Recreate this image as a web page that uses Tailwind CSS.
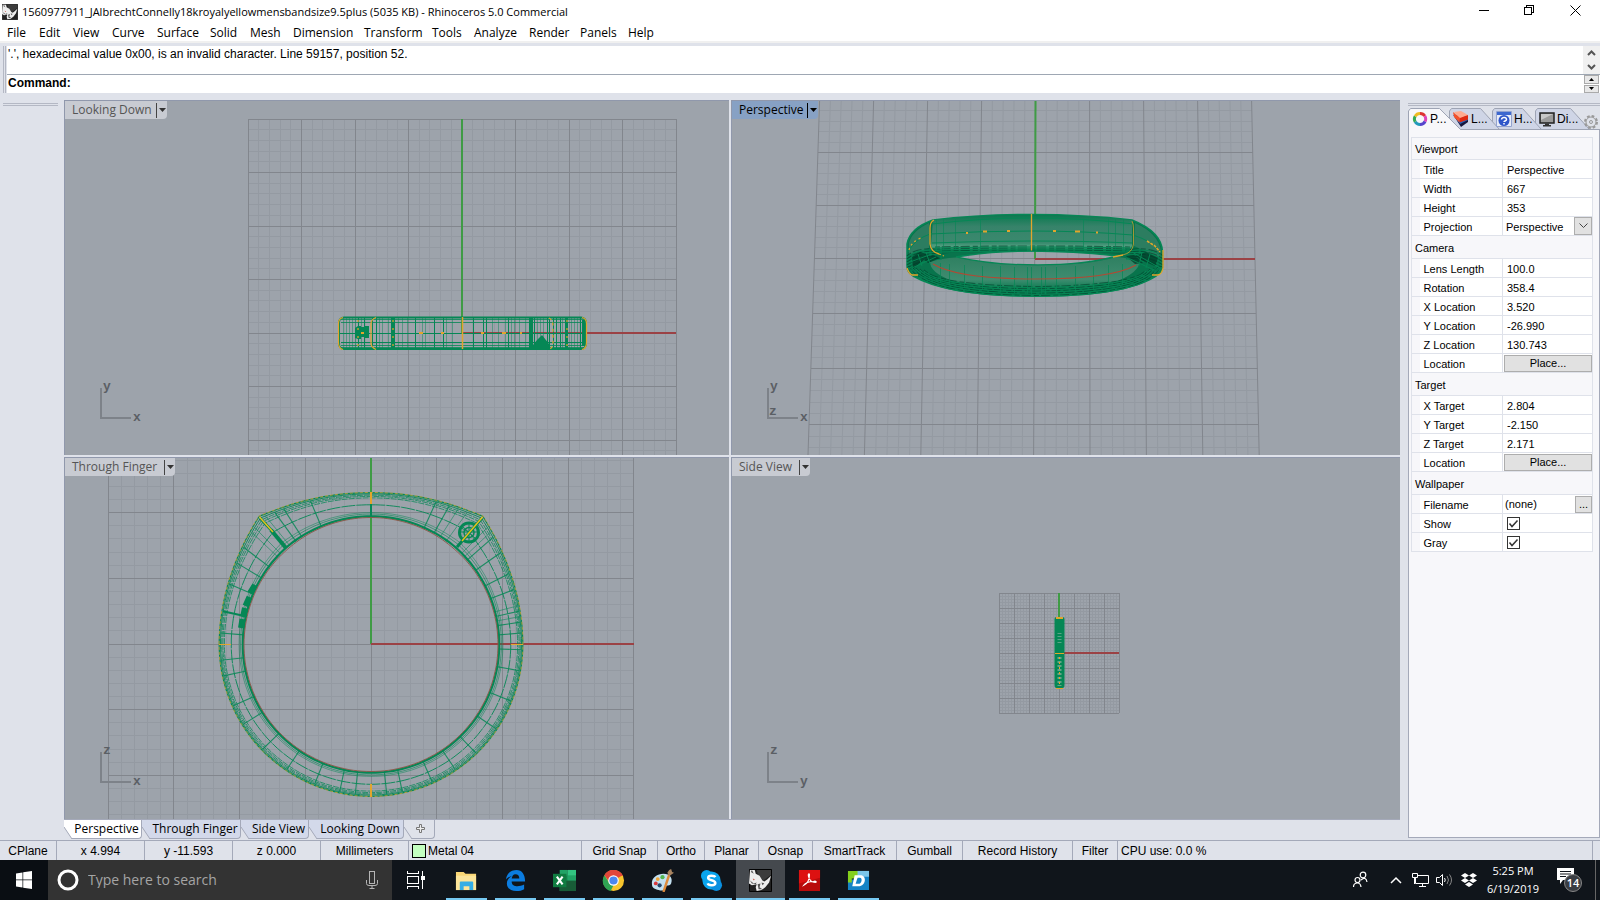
<!DOCTYPE html>
<html lang="en">
<head>
<meta charset="utf-8">
<title>Rhinoceros 5.0 Commercial</title>
<script src="https://cdn.jsdelivr.net/npm/@tailwindcss/browser@4"></script>
</head>
<body class="h-screen flex flex-col overflow-hidden bg-[#dfe2ea] text-black text-[12px] leading-4 font-['Open_Sans','Noto_Sans',sans-serif] select-none">

<header class="bg-white shrink-0">
  <div class="h-[23px] flex items-center">
    <svg class="ml-[2px] mr-1 size-4" viewBox="0 0 24 24"><use href="#rhino"/></svg>
    <h1 class="text-[11px] grow whitespace-nowrap">1560977911_JAlbrechtConnelly18kroyalyellowmensbandsize9.5plus (5035 KB) - Rhinoceros 5.0 Commercial</h1>
    <div class="flex self-start pr-[2px]">
      <button aria-label="Minimize" class="w-[45px] h-5 flex items-center justify-center"><svg width="11" height="11" fill="none" stroke="#000" shape-rendering="crispEdges"><path d="M0 5.500h10"/></svg></button>
      <button aria-label="Restore" class="w-[45px] h-5 flex items-center justify-center"><svg width="11" height="11" fill="none" stroke="#000" shape-rendering="crispEdges"><path d="M.5 2.500h7v7h-7zM2.500 2.500v-2h7v7h-2"/></svg></button>
      <button aria-label="Close" class="w-[46px] h-5 flex items-center justify-center"><svg width="11" height="11" fill="none" stroke="#000"><path d="M.5.5l10 10M10.500.5l-10 10"/></svg></button>
    </div>
  </div>
  <nav class="h-[18px] flex items-center pl-[7px] pt-[2px] text-[12px]" id="menu"></nav>
  <div class="h-[2px] bg-[#f0f0f0]"></div>
</header>

<section class="shrink-0 pt-[3px] pl-[3px] flex h-[50px]" aria-label="Command history">
  <div class="w-[3px] mr-px border-x border-[#b4b8c4]"></div>
  <div class="grow flex flex-col bg-white font-['Liberation_Sans',sans-serif]">
    <div class="h-[29px] shrink-0 flex border-b border-[#9ea7b3]">
      <p class="grow text-[12px] pl-px whitespace-nowrap">'.', hexadecimal value 0x00, is an invalid character. Line 59157, position 52.</p>
      <div class="w-[17px] bg-[#f0f0f0] flex flex-col items-center justify-around">
        <button aria-label="Scroll up" class="flex"><svg width="9" height="6" fill="none" stroke="#555" stroke-width="2"><path d="M1 5l3.500-3.500L8 5"/></svg></button>
        <button aria-label="Scroll down" class="flex"><svg width="9" height="6" fill="none" stroke="#555" stroke-width="2"><path d="M1 1l3.500 3.500L8 1"/></svg></button>
      </div>
    </div>
    <div class="h-[18px] flex items-start">
      <label for="cmd" class="font-bold pl-px">Command:</label>
      <input id="cmd" class="grow h-4 outline-none">
      <div class="w-[15px] mr-px h-[18px] flex flex-col gap-px">
        <button aria-label="Previous" class="grow bg-[#e8e8e8] border border-[#aaa] flex items-center justify-center"><svg width="5" height="3"><path d="M0 3l2.500-3L5 3z"/></svg></button>
        <button aria-label="Next" class="grow bg-[#e8e8e8] border border-[#aaa] flex items-center justify-center"><svg width="5" height="3"><path d="M0 0l2.500 3L5 0z"/></svg></button>
      </div>
    </div>
  </div>
</section>

<main class="grow min-h-0 flex pt-[7px]">
  <aside class="w-16 shrink-0 px-[3px] pt-[3px]"><div class="h-[3px] w-[55px] border-y border-[#b4b8c4]"></div></aside>

  <div class="grow min-w-0 flex flex-col">
    <div class="grow min-h-0 grid grid-cols-[665fr_669fr] grid-rows-[355fr_362fr] gap-[2px]">
      <section class="relative overflow-hidden bg-[#9da3ab] border-t border-l border-[#9098ac]">
        <svg class="block w-full h-full" viewBox="65 101 664 354" preserveAspectRatio="xMidYMid slice" id="v1"></svg>
        <div class="absolute left-0 top-0 h-[18px] flex items-center bg-[#c8cbd2] text-[#555] rounded-br-sm"><span class="pl-[7px] w-[91px]">Looking Down</span><button aria-label="Looking Down menu" class="w-[11px] h-[15px] border-l border-[#444] flex items-center justify-center"><svg width="7" height="4" fill="#333"><path d="M0 0h7L3.500 4z"/></svg></button></div>
      </section>
      <section class="relative overflow-hidden bg-[#9da3ab] border-t border-l border-[#9098ac]">
        <svg class="block w-full h-full" viewBox="732 101 668 354" preserveAspectRatio="xMidYMid slice" id="v2"></svg>
        <div class="absolute left-0 top-0 h-[18px] flex items-center bg-[#87a1c4] rounded-br-sm"><span class="pl-[7px] w-[75px]">Perspective</span><button aria-label="Perspective menu" class="w-[11px] h-[15px] border-l border-black flex items-center justify-center"><svg width="7" height="4"><path d="M0 0h7L3.500 4z"/></svg></button></div>
      </section>
      <section class="relative overflow-hidden bg-[#9da3ab] border-t border-l border-[#9098ac]">
        <svg class="block w-full h-full" viewBox="65 458 664 361" preserveAspectRatio="xMidYMid slice" id="v3"></svg>
        <div class="absolute left-0 top-0 h-[18px] flex items-center bg-[#c8cbd2] text-[#555] rounded-br-sm"><span class="pl-[7px] w-[99px]">Through Finger</span><button aria-label="Through Finger menu" class="w-[11px] h-[15px] border-l border-[#444] flex items-center justify-center"><svg width="7" height="4" fill="#333"><path d="M0 0h7L3.500 4z"/></svg></button></div>
      </section>
      <section class="relative overflow-hidden bg-[#9da3ab] border-t border-l border-[#9098ac]">
        <svg class="block w-full h-full" viewBox="732 458 668 361" preserveAspectRatio="xMidYMid slice" id="v4"></svg>
        <div class="absolute left-0 top-0 h-[18px] flex items-center bg-[#c8cbd2] text-[#555] rounded-br-sm"><span class="pl-[7px] w-[67px]">Side View</span><button aria-label="Side View menu" class="w-[11px] h-[15px] border-l border-[#444] flex items-center justify-center"><svg width="7" height="4" fill="#333"><path d="M0 0h7L3.500 4z"/></svg></button></div>
      </section>
    </div>
    <div class="h-[21px] shrink-0 flex border-t border-[#a4a9b9]" id="viewtabs"></div>
  </div>

  <aside class="w-[200px] shrink-0 pl-2 flex flex-col">
    <div class="mt-[3px] h-[3px] border-y border-[#b4b8c4]"></div>
    <div class="relative h-6 shrink-0 flex items-end text-[12px] font-['Liberation_Sans',sans-serif]">
      <svg class="absolute inset-0 w-full h-full" viewBox="1408 106 192 24" preserveAspectRatio="none" stroke="#9ea4b4">
        <path d="M1535.500 129.500V111l2-2.500h33l19 21z" fill="#cfd5e6"/>
        <path d="M1492.500 129.500V111l2-2.500h28l19 21z" fill="#cfd5e6"/>
        <path d="M1449.500 129.500V111l2-2.500h29l19 21z" fill="#cfd5e6"/>
        <path d="M1459 129.500h141" fill="none"/>
        <path d="M1408.500 131V111l2-2.500h29l21 21V131z" fill="#f7f7fa" />
      </svg>
      <button class="relative w-[41px] h-[22px] pl-[4px] pb-px flex items-center gap-[2px]"><svg width="16" height="16" fill="none" stroke-width="3"><path stroke="#d33" d="M8 2.500A5.500 5.500 0 0 1 12.800 5"/><path stroke="#d4b" d="M12.800 5A5.500 5.500 0 0 1 13 10.500"/><path stroke="#54c" d="M13 10.500A5.500 5.500 0 0 1 8 13.500"/><path stroke="#29b" d="M8 13.500A5.500 5.500 0 0 1 3.200 10.800"/><path stroke="#3a5" d="M3.200 10.800A5.500 5.500 0 0 1 3.200 5.200"/><path stroke="#eb2" d="M3.200 5.200A5.500 5.500 0 0 1 8 2.500"/></svg>P...</button>
      <button class="relative w-[43px] h-[22px] pl-[4px] pb-px flex items-center gap-[2px]"><svg width="16" height="16"><path d="M1 5l7 11 7-5V8z" fill="#16163c"/><path d="M0 4l7 9 8-4V5z" fill="#2a62b8"/><path d="M1 1l7-1 7 4-8 4z" fill="#ffab90"/><path d="M0 1l7 6-.5 4.500L1 6z" fill="#f4502a"/><path d="M7 7l8-3v4.500l-8.500 3z" fill="#e02a10"/></svg>L...</button>
      <button class="relative w-[43px] h-[22px] pl-[4px] pb-px flex items-center gap-[2px]"><svg width="16" height="16"><path d="M.5.5h15v15H.5z" fill="#e8ecf8" stroke="#93a3cf"/><path d="M1 1h14v3H1z" fill="#3d68cf"/><circle cx="8" cy="9.500" r="5.500" fill="#2e56c9"/><path d="M5.500 8.500c.5-3 5-2.500 5 0 0 1.500-2.500 1.500-2.500 2.500m0 1v1.500" fill="none" stroke="#fff" stroke-width="1.500"/></svg>H...</button>
      <button class="relative w-[45px] h-[22px] pl-[4px] pb-px flex items-center gap-[2px]"><svg width="16" height="16"><path d="M1 2h14v10H1z" fill="#9b9b9b" stroke="#222" stroke-width="1.500"/><path d="M2 3h12L2 9z" fill="#c8c8c8"/><path d="M6 12.500h4v1.500h2v1.500H4V14h2z" fill="#333"/></svg>Di...</button>
      <button aria-label="Panel options" class="relative h-[22px] pl-[3px] flex items-end"><svg width="16" height="16" fill="none" stroke="#999"><circle cx="8" cy="8" r="6" stroke-width="2" stroke-dasharray="2.700 2"/><circle cx="8" cy="8" r="5"/><circle cx="8" cy="8" r="1.500"/></svg></button>
    </div>
    <div class="grow bg-[#f7f7fa] border-x border-b border-[#a4a9b9] pt-[7px] px-[2px] pr-[6px] mb-[2px]">
      <table class="w-full table-fixed border border-[#dfe2ea] text-[11px] leading-[14px] font-['Liberation_Sans',sans-serif] border-collapse" id="props"></table>
    </div>
  </aside>
</main>

<div class="h-5 shrink-0 flex border-t border-[#a4a9b9] text-[12px] font-['Liberation_Sans',sans-serif]" id="status"></div>

<footer class="h-10 shrink-0 bg-[#10151b] flex items-stretch text-white">
  <button aria-label="Start" class="w-12 flex items-center justify-center bg-[#0a0e13]"><svg width="16" height="18" viewBox="0 0 16 16" fill="#fff" preserveAspectRatio="none"><path d="M0 2.200L6.500 1.300V7.600H0zM7.200 1.200L16 0v7.600H7.200zM0 8.300h6.500v6.300L0 13.700zM7.200 8.300H16V16l-8.800-1.200z"/></svg></button>
  <div class="w-[344px] bg-[#333] flex items-center">
    <svg class="ml-[9px]" width="22" height="22"><circle cx="11" cy="11" r="9" fill="none" stroke="#fff" stroke-width="3"/></svg>
    <input aria-label="Search" placeholder="Type here to search" class="ml-[9px] grow bg-transparent text-[14px] placeholder:text-[#a5a5a5] outline-none">
    <button aria-label="Speak" class="mr-[14px]"><svg width="12" height="18" fill="none" stroke="#b5b5b5"><rect x="3.500" y=".5" width="5" height="12"/><path d="M.5 9v3.500q0 2 2.500 2h6q2.500 0 2.500-2V9M6 14.500v3M3.500 17.500h5"/></svg></button>
  </div>
  <button aria-label="Task view" class="w-[47px] flex items-center justify-center"><svg width="18" height="18" fill="none" stroke="#fff" shape-rendering="crispEdges"><path d="M.5 5.500h11v7H.5zM.5 0v2.500h11V0M.5 18v-2.500h11V18M15.500 0v18"/><path d="M14 5h3v3h-3z" fill="#fff"/></svg></button>
  <nav class="flex grow pl-[3px]" id="apps" aria-label="Running apps"></nav>
  <div class="flex items-center">
    <button aria-label="People" class="mr-[22px]"><svg width="16" height="18" fill="none" stroke="#fff" stroke-width="1.200"><circle cx="5.500" cy="9" r="2.500"/><circle cx="11" cy="4" r="2.800"/><path d="M1.500 16q0-4 4-4 3 0 3.500 4M9 9q5-4 6 2"/></svg></button>
    <button aria-label="Show hidden icons" class="mr-[10px]"><svg width="12" height="8" fill="none" stroke="#fff" stroke-width="1.500"><path d="M1 7l5-5 5 5"/></svg></button>
    <svg class="mr-[7px]" width="17" height="14" fill="none" stroke="#fff"><path d="M5.500 2.500h11v8h-13v-6M7 13.500h7M10.500 10.500v3M.5.5h5v4h-5zM2.500 5v6"/></svg>
    <svg class="mr-2" width="17" height="14" fill="none" stroke="#fff"><path d="M.5 4.500h3l3-3v11l-3-3h-3z"/><path d="M8.500 5q1.500 2 0 4" /><path d="M11 3q3 4 0 8M13.500 1.500q4 5.500 0 11" stroke="#888"/></svg>
    <svg class="mr-[9px]" width="16" height="14" fill="#fff"><path d="M4 0l4 2.500L4 5 0 2.500zM12 0l4 2.500L12 5 8 2.500zM4 5l4 2.500L4 10 0 7.500zM12 5l4 2.500-4 2.500-4-2.500zM8 9l4 2.500L8 14l-4-2.500z"/></svg>
    <div class="w-[54px] text-center text-[11px] leading-[18px] whitespace-nowrap">5:25 PM<br>6/19/2019</div>
    <button aria-label="Notifications" class="relative ml-[17px] w-[26px] h-6"><svg width="26" height="24"><path d="M0 0h17v12H6l-3 4v-4H0z" fill="#fff"/><path d="M3 3.500h11M3 6h11M3 8.500h6" stroke="#10151b"/><circle cx="16" cy="15" r="8.500" fill="#3a3d42" stroke="#888"/></svg><span class="absolute left-[7px] top-[7px] w-[18px] text-center text-[11px] font-semibold leading-4">14</span></button>
    <div class="ml-[12px] w-[5px] h-10 border-l border-[#666]"></div>
  </div>
</footer>

<svg class="hidden"><defs>
  <symbol id="rhino" viewBox="0 0 24 24"><path d="M.5.5h23v23H.5z" fill="#222" stroke="#000"/><path d="M8 1h15v5l-8 6-5-4z" fill="#3c3c3c"/><path d="M1 1h5l1 4 4 2 3 5 2 1 3-2 4-4-2 7-4 5-4 3-5 1-1-4 1-3-5 1-3-2z" fill="#ededed"/><path d="M3 1l2 4-3-2zM1 12l4 3 3-1-1 2-4-1zM9 16l3-1-1 4 3 2h-4zM13 14l3 1-2 2z" fill="#555"/><path d="M4 10l2 1-1 1z" fill="#c0392b"/></symbol>
</defs></svg>

<script>
const $ = id => document.getElementById(id);

/* Menu bar: label and the width of its slot */
$('menu').innerHTML = [['File',32],['Edit',34],['View',39],['Curve',45],['Surface',53],['Solid',40],['Mesh',43],['Dimension',71],['Transform',68],['Tools',42],['Analyze',55],['Render',51],['Panels',48],['Help',40]]
  .map(([t,w]) => `<button class="text-left text-[12px]" style="width:${w}px">${t}</button>`).join('');

$('viewtabs').innerHTML = [['Perspective',78,'#ffffff'],['Through Finger',99,'#d3d9ea'],['Side View',68,'#d3d9ea'],['Looking Down',95,'#d3d9ea']]
  .map(([t,w,c]) => `<button class="relative h-[19px] border-r border-b rounded-br-sm border-[#a4a9b9] pl-[8px] text-center leading-[18px] whitespace-nowrap" style="width:${w}px;background:${c}"><svg class="absolute left-0 -bottom-px" width="9" height="12"><path d="M0 0l8 12H0z" fill="#dfe2ea"/><path d="M0 0l8 12" stroke="#a4a9b9"/></svg>${t}</button>`).join('')
  + `<button aria-label="New viewport" class="relative w-[31px] h-[19px] border-r border-b rounded-br-sm border-[#a4a9b9] flex items-center justify-center"><svg class="absolute left-0 -bottom-px" width="9" height="12"><path d="M0 0l8 12H0z" fill="#dfe2ea"/><path d="M0 0l8 12" stroke="#a4a9b9"/></svg><svg class="ml-1" width="10" height="10" fill="#eee" stroke="#777"><path d="M3.500.5h2v3h3v2h-3v3h-2v-3h-3v-2h3z"/></svg></button>`;

$('status').innerHTML = [['CPlane',57],['x 4.994',88],['y -11.593',88],['z 0.000',88],['Millimeters',88],['*Metal 04',173],['Grid Snap',76],['Ortho',47],['Planar',54],['Osnap',54],['SmartTrack',84],['Gumball',66],['Record History',110],['Filter',45]]
  .map(([t,w]) => t[0] === '*'
    ? `<div class="flex items-center gap-[2px] pl-[3px] border-r border-[#a4a9b9]" style="width:${w}px"><span class="size-[14px] bg-[#c3ffc0] border border-black"></span>${t.slice(1)}</div>`
    : `<button class="border-r border-[#a4a9b9] text-center whitespace-nowrap" style="width:${w}px">${t}</button>`).join('')
  + `<div class="grow flex items-center pl-[3px] mr-[7px] border-r border-[#a4a9b9]">CPU use: 0.0 %</div>`;

/* Property grid */
const place = '<button class="block w-full h-[17px] bg-[#e1e1e1] border border-[#adadad] text-center leading-[15px]">Place...</button>';
const box = id => `<span class="relative block size-[13px] ml-[3px]"><input type="checkbox" id="${id}" checked class="block appearance-none size-[13px] border border-[#333] bg-white"><svg class="absolute left-0 top-0" width="13" height="13" fill="none" stroke="#333" stroke-width="1.500"><path d="M2.500 6.500l2.500 3 5.500-6"/></svg></span>`;
const txt = t => `<span class="pl-[3px]">${t}</span>`;
const groups = [
  ['Viewport', [['Title',txt('Perspective')],['Width',txt('667')],['Height',txt('353')],
    ['Projection','<span class="relative block"><select id="p-Projection" class="block appearance-none w-full h-[18px] pt-px pl-[2px] outline-none"><option>Perspective</option><option>Parallel</option></select><span class="absolute right-0 top-0 w-[18px] h-[18px] bg-[#e1e1e1] border border-[#adadad] flex items-center justify-center pointer-events-none"><svg width="9" height="6" fill="none" stroke="#444"><path d="M.5.5l4 4 4-4"/></svg></span></span>']]],
  ['Camera', [['Lens Length',txt('100.0')],['Rotation',txt('358.4')],['X Location',txt('3.520')],['Y Location',txt('-26.990')],['Z Location',txt('130.743')],['Location',place]]],
  ['Target', [['X Target',txt('2.804')],['Y Target',txt('-2.150')],['Z Target',txt('2.171')],['Location',place]]],
  ['Wallpaper', [['Filename','<span class="flex justify-between items-center"><span class="pl-px">(none)</span><button class="w-[17px] h-[17px] bg-[#e1e1e1] border border-[#adadad] leading-3">...</button></span>'],['Show',box('p-Show')],['Gray',box('p-Gray')]]]
];
$('props').innerHTML = '<colgroup><col class="w-2"><col class="w-[83px]"><col></colgroup>' + groups.map(([g,rows],i) =>
  `<tbody><tr class="${i ? 'h-[23px]' : 'h-[22px]'}"><th colspan="3" class="text-left font-normal pl-[3px] p-0 pt-px">${g}</th></tr>` +
  rows.map(([k,v]) => `<tr class="h-[19px] border-y border-[#dfe2ea]"><td class="p-0"></td><th class="bg-white text-left font-normal p-0 pl-1 pt-[2px] border-r border-[#dfe2ea]">${['Projection','Show','Gray'].includes(k) ? `<label for="p-${k}">${k}</label>` : k}</th><td class="bg-white p-0 pl-px ${v.startsWith('<span class="pl') ? 'pt-[2px]' : ''}">${v}</td></tr>`).join('') + '</tbody>').join('');

/* Taskbar apps */
const apps = [
 ['File Explorer','<path d="M1 3h8l2 2h11v17H1z" fill="#fbd775"/><path d="M1 7h21v15H1z" fill="#fde59a"/><path d="M5 22v-8q0-1 1-1h12q1 0 1 1v8h-4v-4H9v4z" fill="#35aee6"/>'],
 ['Edge','<path d="M2 11C3 3 9 1 13 1c6 0 9 5 9 12H8c0 4 3 5 6 5 2 0 5-.6 7-1.800V21c-2 1.300-5 2-8 2-7 0-10-4-10-8 0-4 3-7 6-8-2 .5-5 1.500-7 4zM8 10h8c0-3-1.500-4.500-4-4.500S8.500 7.500 8 10z" fill="#0b7ce0"/>'],
 ['Excel','<path d="M7 1h8v22H7z" fill="#21a366"/><path d="M15 1h9v11h-9z" fill="#33c481"/><path d="M7 7h17v5H7z" fill="#17894f"/><path d="M7 12h17v11H7z" fill="#185c37"/><path d="M15 7h9v5h-9z" fill="#21a366"/><path d="M0 5h14v14H0z" fill="#107c41"/><path d="M4 8l6 8M10 8l-6 8" stroke="#fff" stroke-width="2.200"/>'],
 ['Chrome','<circle cx="12" cy="12" r="11" fill="#f7c52d"/><path d="M12 12L2.500 6.500A11 11 0 0 1 21.500 6.500z" fill="#e1463a"/><path d="M12 7h9.800a11 11 0 0 0-19.300-.5L8 14z" fill="#e1463a"/><path d="M2.500 6.500L8 15l4 2-3 6A11 11 0 0 1 2.500 6.500z" fill="#2fa353"/><circle cx="12" cy="12" r="5.500" fill="#fff"/><circle cx="12" cy="12" r="4.300" fill="#4b87f0"/>'],
 ['Paint','<path d="M1 16C0 9 7 5 13 5c7 0 10 5 8 10-1 3-5 1-6 4-1 4-4 4-7 3-4-1-7-2-7-6z" fill="#c3e0f0"/><circle cx="5" cy="15" r="2" fill="#d8383d"/><circle cx="7" cy="10.500" r="2" fill="#efa336"/><circle cx="12" cy="8.500" r="2.200" fill="#52b650"/><circle cx="9" cy="17" r="2.200" fill="#24456b"/><path d="M13 24l6-18" stroke="#dc8a3b" stroke-width="2.500"/><path d="M17 4l2-3 2-1 1 3 2 1-3 2-2 1z" fill="#a98461"/>'],
 ['Skype','<circle cx="12" cy="12" r="9.500" fill="#0aa5ee"/><circle cx="7" cy="7" r="6" fill="#0aa5ee"/><circle cx="17" cy="17" r="6" fill="#0a8fe0"/><path d="M16 8.500c-1-2-7.500-2.400-7.500.6 0 3.400 7.500 2 7.500 5.600 0 3-7 3-8 .3" fill="none" stroke="#fff" stroke-width="2.600"/>'],
 ['Rhinoceros','<use href="#rhino" width="24" height="24"/>'],
 ['Acrobat','<path d="M1 1h22v22H1z" fill="#b90b0b"/><path d="M1 1h22v8L1 15z" fill="#dd1111"/><path d="M6 17c4-2 6-6 6-11 0-2-2-1-1 2 1 4 4 6 7 6 2 0 1-2-2-1-4 0-8 1-10 4z" fill="none" stroke="#fff" stroke-width="1.200"/>'],
 ['DesignSpark','<path d="M10 2h13v7H10z" fill="#7cc6ea"/><path d="M1 11h9V8h13v14H1z" fill="#1583c6"/><path d="M1 2h10v8H5v4H1z" fill="#84cf1c"/><path d="M8 6.500h6c7 0 6 11.500-2 11.500H5.500zM11 9l-2 6.500h3c3.500 0 4.500-6.500 1.500-6.500z" fill="#fff" fill-rule="evenodd"/>']
];
$('apps').innerHTML = apps.map(([n,s]) => `<button aria-label="${n}" class="relative w-[49px] flex items-center justify-center ${n === 'Rhinoceros' ? 'bg-[#45494e]' : ''}"><svg width="23" height="23" viewBox="0 0 24 24">${s}</svg><span class="absolute bottom-0 h-[2px] bg-[#76c9f2] ${n === 'Rhinoceros' ? 'inset-x-0' : 'inset-x-1'}"></span></button>`).join('');

/* ---- Viewport drawings ---- */
const MIN = '#949aa2', MAJ = '#82868d', RED = '#9b4245', GRN = '#3f9b45', WIRE = '#058755', GOLD = '#e2a52c';
const line = (x1,y1,x2,y2,c,w=1,o=1) => `<path d="M${x1} ${y1}L${x2} ${y2}" stroke="${c}" stroke-width="${w}" opacity="${o}" fill="none"/>`;
const crisp = s => `<g shape-rendering="crispEdges">${s}</g>`;
function grid(ox, oy, step, n) {
  let a = '', b = '';
  const R = step * n;
  for (let i = -n * 5; i <= n * 5; i++) {
    const x = Math.floor(ox + i * step / 5) + .5, y = Math.floor(oy + i * step / 5) + .5, m = i % 5 === 0;
    const s = line(x, oy - R, x, oy + R, m ? MAJ : MIN) + line(ox - R, y, ox + R, y, m ? MAJ : MIN);
    m ? b += s : a += s;
  }
  return crisp(a + b);
}
const axes = (ox, oy, len) => crisp(line(ox, oy, ox, oy - len, GRN, 2) + line(ox, oy, ox + len, oy, RED, 2));
const gizmo = (x, y, up, right, z) => crisp(line(x, y, x, y - 30, '#7d8289', 2) + line(x - 1, y, x + 30, y, '#7d8289', 2)) +
  `<g font-family="Liberation Mono, monospace" font-size="13" font-weight="bold" fill="#5b5f65"><text x="${x+2}" y="${y-28}">${up}</text><text x="${x+32}" y="${y+3}">${right}</text>${z ? `<text x="${x+1}" y="${y-3}">${z}</text>` : ''}</g>`;

/* Looking Down */
{
  let s = grid(462, 333, 53.5, 4) + axes(462, 333, 214);
  s += `<rect x="339" y="317.500" width="247" height="31.500" rx="5" fill="none" stroke="${WIRE}" stroke-width="2"/>`;
  const h = [319,322,345,347].map(y => line(341, y, 585, y, WIRE, 1, .8)).join('') + line(341, 342, 585, 342, WIRE, 1) + line(339, 333, 587, 333, WIRE, 1);
  const strong = [358,364,372,376,391,394,415,434,443,473,483,486,508,530,532,534,547,549,553,556,560,565,566,567,580];
  const faint = [343,346,349,352,355,361,379,382,388,398,402,407,422,425,446,452,492,498,505,511,514,519,525,537,540,543,562,571,574,577];
  s += crisp(h + strong.map(x => line(x + .5, 318, x + .5, 349, WIRE, 1, 1)).join('') + faint.map(x => line(x + .5, 318, x + .5, 349, WIRE, 1, .45)).join('') + line(393, 318, 393, 349, WIRE, 4) + line(531, 318, 531, 349, WIRE, 4) + line(584, 320, 584, 346, WIRE, 4));
  s += `<path d="M355 328l3-2h3v1h3v-1h5v12h-5v-1h-3v2h-3l-3-1zM533 349v-4l4-5 5-5 7 9v5z" fill="${WIRE}"/>`;
  s += `<g fill="none" stroke="${GOLD}" stroke-width="1.200"><path d="M343 317.500q-4.500 1-4.500 6v19q0 6 4.500 7M376 317.500q-5 2-5 6v19q0 5 5 7M582 317.500q4.500 1 4.500 6v19q0 6-4.500 7"/><path d="M549 318q4 2 4 8v18q0 3-3 5" stroke-dasharray="3 3"/><path d="M462.500 317v32" stroke-width="1.500"/><path d="M358 320v27M393 320v27M567 320v27" stroke-dasharray="2 6"/><path d="M419 333h4M441 333h3M481 333h3M502 333h4M520 333h2M361 333h3" stroke-width="2"/></g>`;
  s += gizmo(101, 418, 'y', 'x');
  $('v1').innerHTML = s;
}

/* Perspective */
{
  let a = '', b = '';
  for (let i = 0; i <= 40; i++) {
    const u = i / 5, s = line(819.600 + 54 * u, 101, 808 + 56.400 * u, 455, i % 5 ? MIN : MAJ);
    i % 5 ? a += s : b += s;
  }
  const ys = [100.500,152.500,205.500,258.500,313.500,368.500,424.500,482];
  for (let i = 0; i < 7; i++) for (let j = 0; j < 5; j++) {
    const y = ys[i] + (ys[i+1] - ys[i]) * j / 5, k = (y - 101) / 354;
    const s = crisp(line(819.600 - 11.600 * k, Math.floor(y) + .5, 1251.800 + 7.600 * k, Math.floor(y) + .5, j ? MIN : MAJ));
    j ? a += s : b += s;
  }
  let s = a + b + line(1035.500, 101, 1035, 259, GRN, 2) + crisp(line(1035, 259, 1255, 259, RED, 2));
  s += `<defs><linearGradient id="band" x1="0" x2="0" y1="0" y2="1"><stop offset="0" stop-color="#0b7a50"/><stop offset=".3" stop-color="#37836a"/><stop offset=".72" stop-color="#3a8a6e"/><stop offset=".8" stop-color="#4fa080"/><stop offset=".9" stop-color="#0c7a50"/><stop offset="1" stop-color="#056240"/></linearGradient>
  <linearGradient id="inner" x1="0" x2="0" y1="0" y2="1"><stop offset="0" stop-color="#2f8061"/><stop offset=".7" stop-color="#3f8c70"/><stop offset="1" stop-color="#0c7d52"/></linearGradient></defs>`;
  s += `<path fill-rule="evenodd" fill="#08744c" stroke="${WIRE}" stroke-width="1.500" d="M933 220Q980 214.500 1031 214.500Q1085 214.500 1132 220Q1162 232 1162.500 252V266Q1163 272 1156 276Q1125 296 1036 296Q948 296 913 276Q907 272 907 266V244Q910 228 933 220zM956 257Q990 265 1038 265Q1085 265 1117 256Q1080 251.500 1031 251Q990 251 956 257z"/>`;
  s += `<path fill="url(#inner)" d="M930 262Q942 258 956 257.500Q990 265.500 1038 265.500Q1085 265.500 1117 257Q1130 258 1140 262Q1138 272 1120 280Q1085 289 1036 289Q985 289 950 280Q930 272 930 262z"/>`;
  s += `<path fill="url(#band)" d="M933 220Q980 215 1031 215Q1085 215 1132 220V246Q1130 253 1120 254Q1080 250 1031 250Q975 250 942 254Q932 252 931 245z"/>`;
  s += `<path fill="#2c7d60" d="M929 223Q912 231 909 243V255L929 248zM1135 223Q1158 233 1161 251V258L1134 246z"/>`;
  const low = [], arcs = [];
  for (let k = 0; k < 5; k++) low.push(`M${908+k*4} ${266+k}Q${925+k*3} ${295-k*2.500} 1036 ${295.5-k*2.200}Q${1148-k*3} ${295-k*2.500} ${1162-k*4} ${266+k}`);
  for (let k = 0; k < 3; k++) arcs.push(`M935 ${251-k*2}Q980 ${250-k*2} 1031 ${250-k*2}Q1085 ${250-k*2} 1130 ${251-k*2}`);
  const top = 'M930 234Q980 231 1031 231Q1085 231 1133 235Q1152 241 1161 252M930 234Q915 239 908 252M932 224Q980 218 1031 218Q1085 218 1134 224M932 243Q980 241 1031 241Q1085 241 1132 243';
  for (let k = 0; k < 5; k++) arcs.push(`M907 ${256+k*3}Q${918+k*2} ${246+k*3} 942 ${250+k*2}M1163 ${256+k*3}Q${1152-k*2} ${246+k*3} 1126 ${250+k*2}`);
  s += `<path d="${low.join('') + arcs.join('')}" fill="none" stroke="#03452e" stroke-width="1.200" stroke-dasharray="5 2 9 3" opacity=".65"/><path d="${low.join('') + arcs.join('')}" transform="translate(0 1)" fill="none" stroke="${WIRE}" stroke-width="1"/><path d="${top}" fill="none" stroke="${WIRE}" stroke-width="1"/>`;
  s += `<path d="M912 257l8-5 10 3-10 8-7 6zM923 258l10-3 7 3-12 5zM1135 256l11-4 12 6-3 8-10-4zM1126 256l8-1 9 8-8 1z" fill="#033b28" opacity=".75"/><path d="M910 262l22-8M912 268l24-11M918 254l4 12M926 252l4 12M1132 252l28 16M1128 258l26 12M1142 252l-3 14M1150 254l-4 14" stroke="${WIRE}" fill="none"/>`;
  s += crisp([936,943,955,980,1083,1108,1115,1123].map(x => line(x+.5, 219, x+.5, 250, WIRE, 1, .6)).join('') + [940,949,964,982,1000,1014,1027,1031,1041,1045,1056,1075,1093,1108,1122].map(x => { const d = ((x-1036)/110)**2; return line(x+.5, 267 - d*5, x+.5, 294 - d*15, WIRE, 1, .7); }).join(''));
  s += `<path d="M933 264Q958 279 1036 279Q1112 279 1136 265" fill="none" stroke="#b04a34" stroke-width="1.200"/>`;
  s += `<g fill="none" stroke="${GOLD}" stroke-width="1.300"><path d="M1031.500 214v36.500M934 220q-4 2-4 8v16q1 8 9 10"/><path d="M939 254l5 2" stroke-dasharray="2 2"/><path d="M1132 221q1.500 3 1.500 8v15q-1 9-11 11" stroke-width="1" opacity=".7"/><path d="M1123 255l-10 2"/><path d="M1163 250v18q-1 6-5 7h-6M907 268q2 6 5 7h6"/><path d="M983 231.500h4M1007 231h3M1053 231h3M1075 231.500h5M1096 232.500h2M966 233h2" stroke-width="1.800"/><path d="M909 250q2-8 12-12" stroke-dasharray="2 3"/><path d="M1147 241l8 5 5 6" stroke-width="1.600" stroke-dasharray="3 1"/></g>`;
  s += gizmo(768, 418, 'y', 'x', 'z');
  $('v2').innerHTML = s;
}

/* Through Finger: layers are interpolated between the outer profile and the bore */
{
  const C = [371, 644.500], R = 127.500;
  let s = grid(371, 644, 65.700, 4) + axes(371, 644, 263);
  const bez = (p, t) => { const u = 1 - t; return [0,1].map(i => u*u*u*p[0][i] + 3*u*u*t*p[1][i] + 3*u*t*t*p[2][i] + t*t*t*p[3][i]); };
  const segs = [[[219,644],[219,600],[234,555],[259,516]], [[259,516],[298,500],[330,492.500],[371,492.500]], [[371,492.500],[412,492.500],[444,500],[483,516]], [[483,516],[508,555],[523,600],[523,644]]];
  const outer = [];
  segs.forEach(p => { for (let i = 0; i < 24; i++) outer.push(bez(p, i / 24)); });
  for (let i = 0; i <= 90; i++) { const t = Math.PI * i / 90; outer.push([C[0] + 152 * Math.cos(t), C[1] + 152 * Math.sin(t)]); }
  const inn = p => { const dx = p[0]-C[0], dy = p[1]-C[1], l = Math.hypot(dx, dy); return [C[0]+dx/l*R, C[1]+dy/l*R]; };
  const mix = (p, t) => { const q = inn(p); return [p[0]+(q[0]-p[0])*t, p[1]+(q[1]-p[1])*t]; };
  const layer = (t, c, w, o, d='') => `<path d="M${outer.map(p => mix(p, t).map(v => v.toFixed(1)).join(' ')).join('L')}z" fill="none" stroke="${c}" stroke-width="${w}" opacity="${o}" stroke-dasharray="${d}"/>`;
  s += layer(.01, WIRE, 1.200, 1) + layer(0, GOLD, 1, .7, '3 2') + layer(.06, WIRE, 1, .9) + [.11,.16,.22].map(t => layer(t, WIRE, 1, .75, '6 1')).join('') + layer(.5, WIRE, 1, .9, '14 1') + layer(.82, WIRE, 1, .5) + layer(.88, WIRE, 1, .6) + layer(.97, WIRE, 2.200, 1) + layer(1.020, '#8d5747', 1, .9);
  const at = deg => { const a = deg * Math.PI / 180; let best, bd = 9; outer.forEach(p => { let d = Math.abs(Math.atan2(p[1]-C[1], p[0]-C[0]) - a); d = Math.min(d, 2*Math.PI - d); if (d < bd) { bd = d; best = p; } }); return best; };
  const spoke = (deg, t0, t1, c, w, o=1) => { const p = at(deg), a = mix(p, t0), b = mix(p, t1); return line(a[0], a[1], b[0], b[1], c, w, o); };
  [3,11,23,35,46,56,67,78,84,96,102,113,125,137,147,157,168,174,-4,-8,-12,-21,-28,-36,-41,-60,-66,-113,-122,-126,-142,-148,-156,-176].forEach(d => s += spoke(d, .05, 1, WIRE, 1.100, .85));
  [-10,-14,-44,-46,-54,-57,-134,-129,-136].forEach(d => s += spoke(d, .05, 1, WIRE, 1, .55));
  s += spoke(-168, .05, 1, WIRE, 2) + spoke(-90, 0, 1, WIRE, 2);
  s += line(260, 518, 273, 532, WIRE, 3) + line(271, 530, 286, 548, WIRE, 4) + line(482, 518, 457, 547, WIRE, 3);
  s += `<g stroke="${WIRE}" fill="none"><circle cx="469" cy="532.500" r="9.500" stroke-width="3"/><circle cx="469" cy="532.500" r="5" stroke-width="1.500"/><path d="M461 525l16 15M469 523v19M460 532h19" stroke-width="1"/></g>`;
  s += line(259.500, 517, 273, 532, '#e8c01c', 1.500) + line(482.500, 517, 462, 541, '#e8c01c', 1.500);
  s += `<g stroke="${WIRE}" stroke-width="6"><path d="M255 585l-5 8M249.500 597l-4 9M245 608l-2 9M242.500 619l-1.500 9"/></g>`;
  s += crisp(line(371, 492, 371, 504, GOLD, 2) + line(219, 644, 231, 644, GOLD, 1) + line(511, 644, 523, 644, GOLD, 1) + line(371, 784, 371, 797, GOLD, 2));
  s += gizmo(101, 782, 'z', 'x');
  $('v3').innerHTML = s;
}

/* Side View */
{
  let s = grid(1059, 653, 15, 4) + axes(1059, 653, 60);
  s += `<path d="M1054.500 619q0-2 2-2h6q2 0 2 2v66q0 3-2 3h-6q-2 0-2-3z" fill="${WIRE}"/>`;
  s += crisp(line(1056, 618, 1063, 618, GOLD, 2) + line(1055, 653, 1064, 653, GOLD, 1) + line(1056, 688, 1063, 688, GOLD, 1));
  s += `<path d="M1059.500 657v29" stroke="#8fb09d" stroke-width="4" stroke-dasharray="2 2" opacity=".7"/><path d="M1059.500 657v29" stroke="${GOLD}" stroke-width="1" stroke-dasharray="2 3"/><path d="M1059.500 633v12" stroke="#7fb09d" stroke-width="4" stroke-dasharray="1 2" opacity=".7"/>`;
  s += gizmo(768, 782, 'z', 'y');
  $('v4').innerHTML = s;
}
</script>
</body>
</html>
